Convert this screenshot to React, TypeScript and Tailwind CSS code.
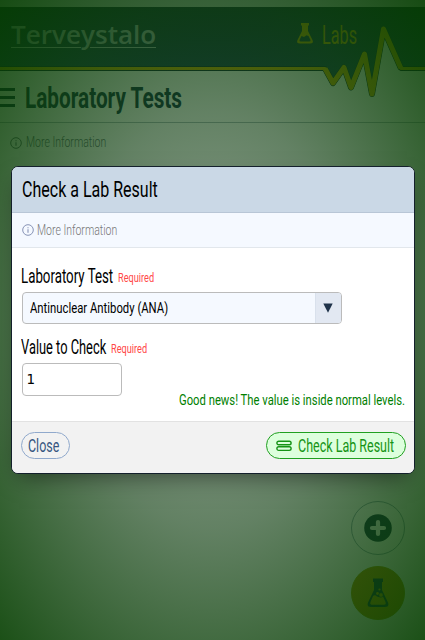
import { useLayoutEffect, useRef, useState } from "react";

/** Condensed text: squeezes its line to the given width. */
function Fit({ w, className = "", children }: { w: number; className?: string; children: string }) {
  const ref = useRef<HTMLSpanElement>(null);
  const [k, setK] = useState(0.7);
  useLayoutEffect(() => {
    if (ref.current) setK(w / ref.current.offsetWidth);
  }, [w]);
  return (
    <span className={"block shrink-0 whitespace-nowrap " + className} style={{ width: w }}>
      <span ref={ref} className="inline-block origin-left align-top" style={{ transform: `scaleX(${k})` }}>
        {children}
      </span>
    </span>
  );
}

function Info({ className = "" }: { className?: string }) {
  return (
    <svg viewBox="0 0 12 12" className={"size-3 shrink-0 " + className} fill="none" stroke="currentColor">
      <circle cx="6" cy="6" r="5.3" strokeWidth="1" />
      <path d="M6 5.2V8.8M6 3.2V4.3" strokeWidth="1.1" />
    </svg>
  );
}

function Page() {
  return (
    <div className="flex h-[640px] flex-col bg-white">
      <div className="h-[7px] bg-[#c8ccd2]" />
      <header className="relative flex h-[64px] items-start bg-linear-to-b from-[#0d1f3a] to-[#163258]">
        <div className="ml-[11px] mt-3.5 flex h-7 w-[145px] flex-col">
          <Fit w={145} className="font-['Open_Sans'] text-[25px] leading-[26px] font-semibold text-[#a9b1c1]">Terveystalo</Fit>
          <div className="flex justify-between">
            <div className="h-px w-[70px] bg-[#b4bccc]" />
            <div className="h-px w-[66px] bg-[#b4bccc]" />
          </div>
        </div>
        <svg viewBox="0 0 18 22" className="ml-[140px] mt-[15px] h-[22px] w-[18px]">
          <path d="M5 1H13V3.5H12V9L16.5 18Q18 21.5 14 21.5H4Q0 21.5 1.5 18L6 9V3.5H5Z" fill="#c9a000" />
          <path d="M5.5 14L8 15L10.5 13.3L12.5 14L14.5 18Q15 19.5 13 19.5H5Q3 19.5 3.5 18Z" fill="#142c4e" />
        </svg>
        <Fit w={35} className="ml-[8px] mt-[15px] text-[25px] leading-[28px] text-[#c9a000]">Labs</Fit>
        <svg viewBox="0 7 425 95" className="absolute left-0 top-0 h-[95px] w-[425px]">
          <path d="M325 69L333 83L344 67L351 88L358 69Z" fill="#163258" />
          <path d="M336 86L344 69L350 90Z" fill="none" />
          <path d="M358 71L364.5 54L367.5 71ZM376 71L383.5 29L401 71Z" fill="#fff" />
          <path d="M367.5 71L372 94L376 71Z" fill="#163258" />
          <path d="M0 68.5H325L333 83L344 67.5L351 87.5L364.5 54L372 94L383.5 29L401 68.5H425" fill="none" stroke="#0a1a35" strokeWidth="5" strokeLinejoin="round" />
          <path d="M325 68.5L333 83L344 67.5L351 87.5L364.5 54L372 94L383.5 29L401 68.5" fill="none" stroke="#0a1a35" strokeWidth="6" strokeLinejoin="round" />
          <path d="M0 68.5H325L333 83L344 67.5L351 87.5L364.5 54L372 94L383.5 29L401 68.5H425" fill="none" stroke="#d6a900" strokeWidth="3" strokeLinejoin="round" />
          <path d="M325 68.5L333 83L344 67.5L351 87.5L364.5 54L372 94L383.5 29L401 68.5" fill="none" stroke="#d6a900" strokeWidth="5" strokeLinejoin="round" />
        </svg>
      </header>
      <div className="flex h-[52px] items-start border-b border-[#a9b4bd]">
        <div className="mt-[17px] flex h-[19px] w-[15px] flex-col justify-between">
          <div className="h-[3px] bg-[#0d2545]" />
          <div className="h-[3px] bg-[#0d2545]" />
          <div className="h-[3px] bg-[#0d2545]" />
        </div>
        <Fit w={157} className="ml-[10px] mt-[10px] text-[29.5px] leading-[34px] font-bold text-[#0d2545]">Laboratory Tests</Fit>
      </div>
      <div className="flex h-[41px] items-center gap-[4px] pl-[10px] text-[#5c6673]">
        <Info className="-mt-[2px]" />
        <Fit w={80} className="-mt-[3px] text-[15.5px] leading-[18px] font-light">More Information</Fit>
      </div>
      <div className="mt-auto mb-[20px] mr-[20px] flex flex-col items-end gap-[11px]">
        <div className="grid size-[54px] place-items-center rounded-full border border-[#8fa3b4]">
          <svg viewBox="0 0 28 28" className="size-7">
            <circle cx="14" cy="14" r="13.8" fill="#0d2545" />
            <path d="M14 8V20M8 14H20" stroke="#f0f3f5" strokeWidth="4.2" strokeLinecap="round" />
          </svg>
        </div>
        <div className="grid size-[54px] place-items-center rounded-full border border-[#a89800] bg-[#b88c00]">
          <svg viewBox="0 0 22 30" className="h-[30px] w-[22px]">
            <path d="M6 .5H16V4H15V12L21 24.5Q22.5 29 18 29H4Q-.5 29 1 24.5L7 12V4H6Z" fill="#0d2545" />
            <path d="M6 18Q8 16.5 10 18.5Q13 20 16 18.5L18.5 24Q19.5 26.8 17 26.8H5Q2.5 26.8 3.5 24Z" fill="#b88c00" />
            <circle cx="14" cy="17" r="2.2" fill="#b88c00" stroke="#0d2545" strokeWidth=".6" />
            <circle cx="10.5" cy="15.5" r="1.4" fill="#b88c00" />
            <circle cx="12.5" cy="11.5" r="1.1" fill="#b88c00" />
          </svg>
        </div>
      </div>
    </div>
  );
}

function Required() {
  return <Fit w={36} className="mt-[5px] text-[13px] leading-[18px] text-[#ff4848]">Required</Fit>;
}

export default function App() {
  return (
    <div className="relative h-[640px] w-[425px] overflow-hidden font-[Roboto,sans-serif]">
      <Page />
      <div className="absolute inset-0 bg-[radial-gradient(ellipse_at_center,rgba(22,60,24,0.48)_0%,rgba(18,64,19,0.66)_46%,rgba(14,66,12,0.785)_71%,rgba(5,63,0,0.91)_100%)]" />
      <div className="absolute left-[11px] top-[166px] flex h-[308px] w-[404px] flex-col overflow-hidden rounded-[7px] border border-[#14202c] bg-white text-black shadow-[0_10px_22px_-8px_rgba(0,0,0,0.5)]">
        <div className="flex h-[46px] items-center border-b border-[#b8c6d6] bg-[#cad8e6] pl-[10px]">
          <Fit w={136} className="-mt-[2px] text-[22.5px] leading-[28px]">Check a Lab Result</Fit>
        </div>
        <div className="flex h-[35px] items-center gap-[3px] border-b border-[#e2e7ec] bg-[#f5f9ff] pl-[10px] text-[#8793b5]">
          <Info />
          <Fit w={80} className="text-[15.5px] leading-[18px] font-light text-[#777]">More Information</Fit>
        </div>
        <div className="flex h-[173px] flex-col pl-[9px] pr-[9px] pt-[16px]">
          <div className="flex h-[28px] items-start gap-[5px]">
            <Fit w={92} className="mt-px text-[19.5px] leading-[24px]">Laboratory Test</Fit>
            <Required />
          </div>
          <div className="ml-[.5px] flex h-8 w-[320px] overflow-hidden rounded-[4px] border border-[#bbb] bg-[#f5f9ff]">
            <div className="flex flex-1 items-center pl-[7.5px]">
              <Fit w={138} className="mt-px text-[14.5px] leading-[18px]">Antinuclear Antibody (ANA)</Fit>
            </div>
            <div className="grid w-[26px] place-items-center border-l border-[#d9e1ec] bg-[#e2e8f2]">
              <svg viewBox="0 0 10 10" className="-mt-px -ml-px size-[10px]"><path d="M.3 .5H9.7L5 9.7Z" fill="#20334a" /></svg>
            </div>
          </div>
          <div className="mt-[11px] flex h-[28px] items-start gap-[5px]">
            <Fit w={85} className="mt-px text-[19.5px] leading-[24px]">Value to Check</Fit>
            <Required />
          </div>
          <div className="ml-[.5px] flex h-[33px] w-[100px] shrink-0 items-center rounded-[4px] border border-[#bbb] pl-[4px] font-['DejaVu_Sans'] text-[13.5px]">1</div>
          <Fit w={226} className="-mt-[5px] self-end text-[15px] leading-[18px] text-[#008000]">Good news! The value is inside normal levels.</Fit>
        </div>
        <div className="flex flex-1 items-start justify-between border-t border-[#e2e2e2] bg-[#f2f2f2] pl-[8.5px] pr-[8.5px] pt-[10px]">
          <div className="flex h-[27px] w-[49px] items-center rounded-full border border-[#90a9cc] pl-[6px]">
            <Fit w={31} className="mt-px text-[18.5px] leading-[24px] text-[#365680]">Close</Fit>
          </div>
          <div className="flex h-[27px] w-[140px] items-center rounded-full border border-[#20a020] bg-[#ddffdd] pl-[9.5px] text-[#169416]">
            <svg viewBox="0 0 16 12" className="mr-[6px] h-3 w-4" fill="none" stroke="currentColor" strokeWidth="1.4">
              <rect x=".9" y="1.2" width="14.2" height="3.6" rx="1.8" />
              <rect x=".9" y="6.8" width="14.2" height="3.6" rx="1.8" />
            </svg>
            <Fit w={96} className="mt-px text-[18.5px] leading-[24px]">Check Lab Result</Fit>
          </div>
        </div>
      </div>
    </div>
  );
}
